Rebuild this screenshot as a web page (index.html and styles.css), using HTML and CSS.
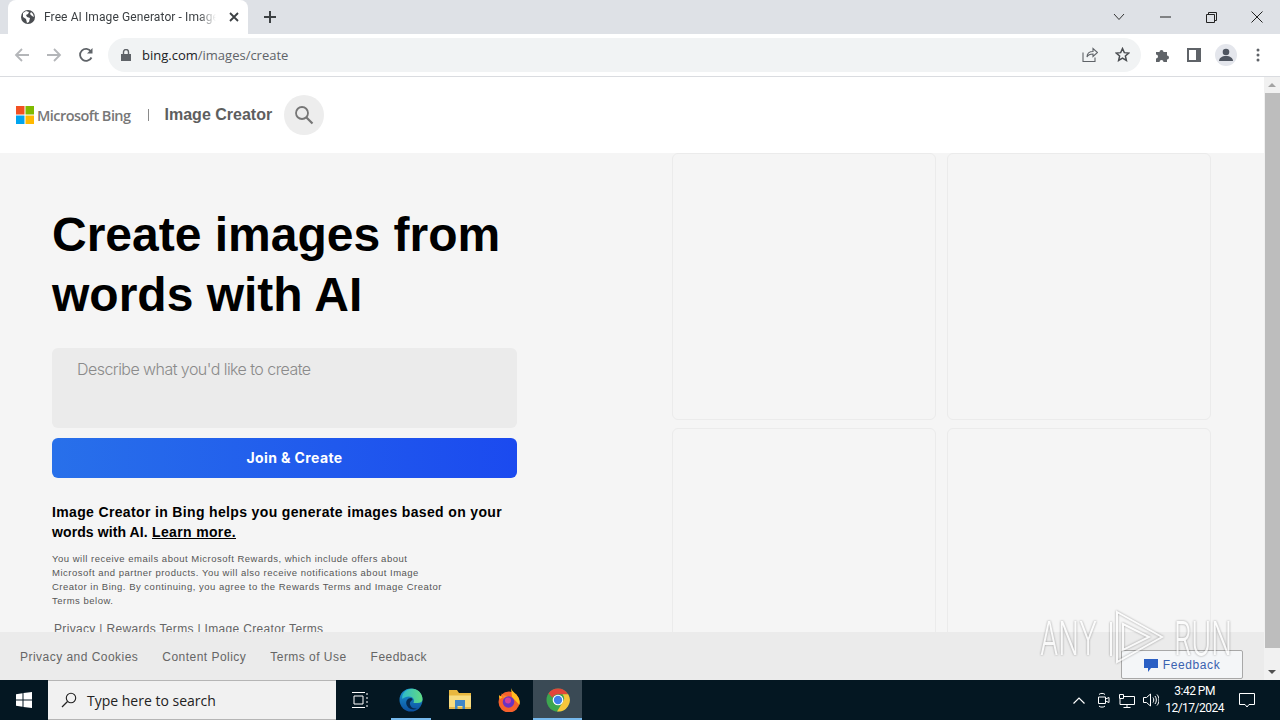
FILE: index.html
```html
<!DOCTYPE html>
<html lang="en">
<head>
  <meta charset="UTF-8">
  <title>Free AI Image Generator - Image Creator</title>
  <link rel="stylesheet" href="styles.css">
</head>
<body>
  <!-- browser chrome -->
  <div class="tabstrip">
    <div class="tab">
      <svg class="tab-globe" width="16" height="16" viewBox="0 0 16 16"><circle cx="8" cy="8" r="7" fill="#4a4d51"/><path d="M3 4l3-2 3 1-1 2-2 1 1 2 3 1-1 4-2 1-1-4-3-2z M11 3l2 2 1 3-2-1-2-2z" fill="#fff"/></svg>
      <span class="tab-title">Free AI Image Generator - Image Creator</span>
      <svg class="tab-close" width="10" height="10" viewBox="0 0 10 10"><path d="M1 1l8 8M9 1l-8 8" stroke="#3c4043" stroke-width="1.8"/></svg>
    </div>
    <svg class="new-tab" width="14" height="14" viewBox="0 0 14 14"><path d="M7 1v12M1 7h12" stroke="#3c4043" stroke-width="2"/></svg>
    <div class="window-btns">
      <svg width="12" height="8" viewBox="0 0 12 8"><path d="M1 1l5 5.500 5-5.500" fill="none" stroke="#333" stroke-width="1"/></svg>
      <svg width="11" height="2" viewBox="0 0 11 2"><path d="M0 1h11" stroke="#222" stroke-width="1"/></svg>
      <svg width="11" height="11" viewBox="0 0 11 11"><path d="M.5 2.500h8v8h-8zM2.500 2.500v-2h8v8h-2" fill="none" stroke="#222"/></svg>
      <svg class="win-close" width="12" height="12" viewBox="0 0 12 12"><path d="M.5.500l11 11M11.500.500l-11 11" stroke="#222"/></svg>
    </div>
  </div>
  <div class="toolbar">
    <svg class="nav-icon" width="16" height="16" viewBox="0 0 16 16"><path d="M15 8H2M8 2L2 8l6 6" fill="none" stroke="#b4b6b9" stroke-width="1.800"/></svg>
    <svg class="nav-icon" width="16" height="16" viewBox="0 0 16 16"><path d="M1 8h13M8 2l6 6-6 6" fill="none" stroke="#b4b6b9" stroke-width="1.800"/></svg>
    <svg class="nav-icon nav-reload" width="16" height="16" viewBox="0 0 16 16"><path d="M13.500 10.500A6 6 0 1 1 13 4.500" fill="none" stroke="#5f6368" stroke-width="1.800"/><path d="M14.500 1v5.500H9z" fill="#5f6368"/></svg>
    <div class="omnibox">
      <svg width="10" height="12" viewBox="0 0 10 12"><path d="M0 5h10v7H0z" fill="#5f6368"/><path d="M2.500 5V3a2.500 2.500 0 0 1 5 0v2" fill="none" stroke="#5f6368" stroke-width="1.400"/></svg>
      <span class="url"><b>bing.com</b>/images/create</span>
      <svg class="omni-share" width="16" height="15" viewBox="0 0 16 15"><path d="M1 5.500v9h12v-4M5 10c0-4 3-5.500 6-5.500V1.500l4.500 4-4.500 4V7c-3 0-5 1-6 3z" fill="none" stroke="#5f6368" stroke-width="1.100"/></svg>
      <svg width="15" height="15" viewBox="0 0 24 24"><path d="M12 2.500l2.900 6.500 7.100.7-5.400 4.700 1.600 7-6.200-3.700-6.200 3.700 1.600-7L2 9.700 9.100 9z" fill="none" stroke="#4a4d51" stroke-width="2.400"/></svg>
    </div>
    <div class="toolbar-icons">
      <svg width="16" height="16" viewBox="0 0 16 16"><path d="M1 5h3.500a2 2 0 1 1 4 0H12v3.500a2 2 0 1 1 0 4V15H8.500a2 2 0 1 0-4 0H1v-3.500a2 2 0 1 0 0-4z" fill="#5f6368"/></svg>
      <svg width="14" height="14" viewBox="0 0 14 14"><path d="M0 0h14v14H0z" fill="#5f6368"/><path d="M2 2h7v10H2z" fill="#fff"/></svg>
      <span class="avatar"><svg width="14" height="14" viewBox="0 0 14 14"><circle cx="7" cy="4" r="3.300" fill="#4f5560"/><path d="M0 13c0-3 3-5 7-5s7 2 7 5z" fill="#4f5560"/></svg></span>
      <svg class="menu-dots" width="4" height="14" viewBox="0 0 4 14"><circle cx="2" cy="2" r="1.500" fill="#5f6368"/><circle cx="2" cy="7" r="1.500" fill="#5f6368"/><circle cx="2" cy="12" r="1.500" fill="#5f6368"/></svg>
    </div>
  </div>

  <!-- page -->
  <div class="viewport">
    <div class="page">
      <header class="site-header">
        <svg class="ms-logo" width="18" height="18" viewBox="0 0 18 18"><path d="M0 0h8.500v8.500H0z" fill="#f25022"/><path d="M9.500 0H18v8.500H9.500z" fill="#7fba00"/><path d="M0 9.500h8.500V18H0z" fill="#00a4ef"/><path d="M9.500 9.500H18V18H9.500z" fill="#ffb900"/></svg>
        <span class="brand">Microsoft Bing</span>
        <span class="brand-sep"></span>
        <span class="product">Image Creator</span>
        <span class="search-btn"><svg width="20" height="20" viewBox="0 0 20 20"><circle cx="8" cy="8" r="6" fill="none" stroke="#767676" stroke-width="1.800"/><path d="M12.500 12.500l6 6" stroke="#767676" stroke-width="2.200"/></svg></span>
      </header>
      <main class="content">
        <section class="hero">
          <h1>Create images from words with AI</h1>
          <div class="prompt">Describe what you'd like to create</div>
          <button class="join">Join &amp; Create</button>
          <p class="lead">Image Creator in Bing helps you generate images based on your <span class="lead-end">words with AI.</span> <a href="#">Learn more.</a></p>
          <p class="legal">You will receive emails about Microsoft Rewards, which include offers about Microsoft and partner products. You will also receive notifications about Image Creator in Bing. By continuing, you agree to the Rewards Terms and Image Creator Terms below.</p>
          <p class="terms">Privacy | Rewards Terms | Image Creator Terms</p>
        </section>
        <section class="gallery">
          <div class="tile"></div>
          <div class="tile"></div>
          <div class="tile"></div>
          <div class="tile"></div>
        </section>
      </main>
      <footer class="site-footer">
        <a href="#">Privacy and Cookies</a>
        <a href="#">Content Policy</a>
        <a href="#">Terms of Use</a>
        <a href="#">Feedback</a>
      </footer>
      <div class="feedback">
        <svg width="14" height="14" viewBox="0 0 14 14"><path d="M0 1h14v9H7l-3 4v-4H0z" fill="#2a5fc4"/></svg>
        <span>Feedback</span>
      </div>
    </div>
    <div class="scrollbar">
      <span class="arrow-up"></span>
      <span class="thumb"></span>
      <span class="arrow-down"></span>
    </div>
  </div>

  <!-- taskbar -->
  <div class="taskbar">
    <span class="start"><svg width="16" height="16" viewBox="0 0 16 16"><path d="M0 2.300l6.500-1v6.200H0zM7.500 1.100L16 0v7.500H7.500zM0 8.500h6.500v6.200l-6.500-1zM7.500 8.500H16V16l-8.500-1.100z" fill="#fff"/></svg></span>
    <div class="task-search">
      <svg width="16" height="16" viewBox="0 0 16 16"><circle cx="10" cy="6" r="4.700" fill="none" stroke="#222" stroke-width="1.100"/><path d="M6.500 9.500L1 15" stroke="#222" stroke-width="1.300"/></svg>
      <span>Type here to search</span>
    </div>
    <span class="task-btn task-view"><svg width="16" height="16" viewBox="0 0 16 16"><path d="M0 .500h13M0 15.500h13M2 4h9v8H2zM15 1v2M15 5v2M15 9v2M15 13v2" fill="none" stroke="#fff"/></svg></span>
    <span class="task-btn running task-edge"><svg width="24" height="24" viewBox="0 0 24 24"><defs><linearGradient id="edge" x1="0" y1="0" x2="0" y2="1"><stop offset="0" stop-color="#1b9ad6"/><stop offset="1" stop-color="#0c4f9e"/></linearGradient><linearGradient id="edge-top" x1="0" y1="0" x2="1" y2="0"><stop offset="0" stop-color="#2fb9c9"/><stop offset="1" stop-color="#62dc83"/></linearGradient></defs><circle cx="12" cy="12" r="11.500" fill="url(#edge)"/><path d="M4 6C7 1 13 0 17 1.500c4 1.500 6.500 5.500 6.500 10 0 2.500-2 3.500-5 3.500h-4c1-2 .5-5-2-6-3-1.500-7 0-9 2C3 9.500 3 8 4 6z" fill="url(#edge-top)"/><path d="M12 10c-3.500 0-5.500 3-4.500 6.500S13 23 18 20.500c-4 .5-6.500-1.500-7-4-.5-2 .5-3.500 2.500-4.500 0-1-.5-2-1.500-2z" fill="#06294f"/></svg></span>
    <span class="task-btn"><svg width="24" height="22" viewBox="0 0 24 22"><path d="M1 1h8l2 3h12v16H1z" fill="#e8b73f"/><path d="M1 6.500h22V20H1z" fill="#f8dc80"/><path d="M1 18h22v2H1z" fill="#e3b64b"/><path d="M7 11h10v9h-2.500v-3h-5v3H7z" fill="#3f86c8"/></svg></span>
    <span class="task-btn"><svg width="24" height="24" viewBox="0 0 24 24"><circle cx="12" cy="14" r="10.500" fill="#f6612c"/><path d="M14 0c1 4 5 5 7 9 2 3 2 6 1.500 8L15 9zM2 7c0 2 0 3 1 4l3-2c-2-.5-3-1-4-2z" fill="#ffbb1f"/><path d="M4 4c1 3 4 4 8 4l-5 3z" fill="#f9892b"/><circle cx="11.500" cy="14" r="5.800" fill="#6a33c2"/><circle cx="11" cy="12.500" r="3" fill="#d43f9a"/></svg></span>
    <span class="task-btn running active"><svg width="24" height="24" viewBox="0 0 24 24"><circle cx="12" cy="12" r="11.500" fill="#3da64f"/><path d="M12 .500a11.500 11.500 0 0 1 10 5.700H12a6 6 0 0 0-5.500 3.500L2.500 5.500A11.500 11.500 0 0 1 12 .500z" fill="#e2463a"/><path d="M22.200 6.200A11.500 11.500 0 0 1 11 23.500l5.500-9a6 6 0 0 0 0-8.300z" fill="#f6c63c"/><circle cx="12" cy="12" r="5.300" fill="#fff"/><circle cx="12" cy="12" r="4.200" fill="#3f80ea"/></svg></span>
    <div class="tray">
      <span class="tray-icon"><svg width="12" height="7" viewBox="0 0 12 7"><path d="M.5 6.500L6 1l5.500 5.500" fill="none" stroke="#fff" stroke-width="1.200"/></svg></span>
      <span class="tray-icon"><svg width="13" height="16" viewBox="0 0 13 16"><path d="M1.500 5h7v6.500h-7zM8.500 7L12 5.500v5L8.500 9M2 2.500C3 1 7 1 8 2.500M2 14c1 1.500 5 1.500 6 0" fill="none" stroke="#fff"/></svg></span>
      <span class="tray-icon"><svg width="16" height="15" viewBox="0 0 16 15"><path d="M5 3.500h10.500v8H1V6M8 11.500v3M4.500 14.500h7M.5 1.500h4v4h-4z" fill="none" stroke="#fff"/></svg></span>
      <span class="tray-icon"><svg width="16" height="14" viewBox="0 0 16 14"><path d="M.5 4.500h3L7.500 1v12l-4-3.500h-3zM10 4.500c1 1.500 1 3.500 0 5M12 3c1.800 2 1.800 6 0 8M14 1.500c2.600 3 2.600 8 0 11" fill="none" stroke="#fff"/></svg></span>
      <div class="clock"><span>3:42 PM</span><span>12/17/2024</span></div>
      <svg class="notify" width="16" height="15" viewBox="0 0 16 15"><path d="M.5.500h15v11H10L8 14l-2-2.500H.5z" fill="none" stroke="#fff"/></svg>
    </div>
  </div>

  <div class="watermark">
    <span class="wm-word">ANY</span>
    <svg width="56" height="54" viewBox="0 0 56 54"><path d="M2 12v34M8 2l45 25L8 52zM14 14l26 13-26 13z" fill="none" stroke="#fff" stroke-width="2"/></svg>
    <span class="wm-word">RUN</span>
  </div>
</body>
</html>
```

FILE: styles.css
```css
* {
  box-sizing: border-box;
}

html, body {
  margin: 0;
  height: 720px;
  overflow: hidden;
}

body {
  position: relative;
  display: flex;
  flex-direction: column;
  width: 1280px;
  font-family: "Liberation Sans", Arial, sans-serif;
  background: #f5f5f5;
}

a {
  color: inherit;
}

/* Browser tab strip */
.tabstrip {
  display: flex;
  align-items: center;
  height: 34px;
  flex: none;
  background: #dee1e6;
}

.tab {
  display: flex;
  align-items: center;
  width: 240px;
  height: 34px;
  margin: 0 0 0 8px;
  padding: 0 9px 0 12px;
  background: #fff;
  border-radius: 8px 8px 0 0;
}

.tab-globe {
  flex: none;
}

.tab-title {
  width: 172px;
  margin-left: 8px;
  font-family: Roboto, sans-serif;
  font-size: 12px;
  letter-spacing: .1px;
  color: #3c4043;
  white-space: nowrap;
  overflow: hidden;
  -webkit-mask-image: linear-gradient(90deg, #000 90%, transparent);
  mask-image: linear-gradient(90deg, #000 90%, transparent);
}

.tab-close {
  margin-left: auto;
}

.new-tab {
  margin-left: 15px;
}

.window-btns {
  display: flex;
  align-items: center;
  gap: 35px;
  margin-left: auto;
  padding-right: 17px;
}

.win-close {
  margin-left: -1px;
}

/* Toolbar */
.toolbar {
  display: flex;
  align-items: center;
  height: 43px;
  flex: none;
  padding: 0 0 1px 14px;
  background: #fff;
  border-bottom: 1px solid #dadce0;
}

.nav-icon {
  margin-right: 16px;
}

.nav-reload {
  margin-right: 14px;
}

.omnibox {
  display: flex;
  align-items: center;
  width: 1033px;
  height: 34px;
  padding: 0 11px 0 13px;
  background: #f1f3f4;
  border-radius: 17px;
}

.url {
  margin-left: 11px;
  font-family: "Open Sans", sans-serif;
  font-size: 13px;
  color: #5f6368;
}

.url b {
  font-weight: 400;
  color: #202124;
}

.omni-share {
  margin-left: auto;
  margin-right: 17px;
}

.toolbar-icons {
  display: flex;
  align-items: center;
  gap: 16px;
  margin-left: 14px;
}

.avatar {
  display: flex;
  align-items: center;
  justify-content: center;
  width: 22px;
  height: 22px;
  margin: 0 -1px 0 -2px;
  border-radius: 50%;
  background: #e4e6ec;
}

.menu-dots {
  margin-left: 4px;
}

/* Page */
.viewport {
  display: flex;
  flex: 1;
  min-height: 0;
}

.page {
  position: relative;
  display: flex;
  flex-direction: column;
  flex: 1;
  min-width: 0;
}

.site-header {
  display: flex;
  align-items: center;
  height: 76px;
  flex: none;
  padding: 0 0 0 16px;
  background: #fff;
}

.brand {
  margin-left: 3px;
  font-family: "Open Sans", sans-serif;
  font-size: 14.500px;
  font-weight: 600;
  letter-spacing: -.55px;
  color: #777;
}

.brand-sep {
  width: 1px;
  height: 12px;
  margin: 0 16px 0 17px;
  background: #8a8a8a;
}

.product {
  font-size: 16px;
  font-weight: 700;
  letter-spacing: 0;
  color: #5e5e5e;
}

.search-btn {
  display: flex;
  align-items: center;
  justify-content: center;
  width: 40px;
  height: 40px;
  margin-left: 12px;
  border-radius: 50%;
  background: #ededed;
}

.content {
  display: flex;
  flex: 1;
  min-height: 0;
  overflow: hidden;
  background: #f5f5f5;
}

.hero {
  width: 672px;
  flex: none;
  padding: 52px 0 0 52px;
}

h1 {
  width: 470px;
  margin: 0;
  font-size: 48px;
  line-height: 60px;
  font-weight: 700;
  color: #000;
}

.prompt {
  width: 465px;
  height: 80px;
  margin-top: 23px;
  padding: 11px 25px;
  background: #ebebeb;
  border-radius: 6px;
  font-family: Inter, sans-serif;
  font-size: 16px;
  font-weight: 300;
  letter-spacing: -.55px;
  color: #8a8a8a;
}

.join {
  display: block;
  width: 465px;
  height: 40px;
  margin-top: 10px;
  padding: 0 0 2px 20px;
  border: none;
  border-radius: 6px;
  background: linear-gradient(90deg, #2870ea, #1b4aef);
  font-family: Inter, "Liberation Sans", sans-serif;
  font-size: 14px;
  font-weight: 700;
  letter-spacing: .4px;
  color: #fff;
}

.lead {
  width: 465px;
  margin: 24px 0 0;
  font-size: 14px;
  line-height: 20px;
  font-weight: 700;
  letter-spacing: .35px;
  color: #000;
}

.lead-end {
  letter-spacing: .1px;
}

.legal {
  width: 395px;
  margin: 10px 0 0;
  font-size: 9.500px;
  line-height: 14px;
  letter-spacing: .5px;
  color: #555;
}

.terms {
  margin: 13px 0 0 2px;
  font-size: 12px;
  line-height: 16px;
  letter-spacing: .33px;
  color: #666;
}

.gallery {
  display: grid;
  grid-template-columns: 264px 264px;
  grid-auto-rows: 267px;
  gap: 8px 11px;
}

.tile {
  background: #f5f5f5;
  border: 1px solid #ebebeb;
  border-radius: 6px;
}

.site-footer {
  display: flex;
  align-items: center;
  gap: 24px;
  height: 48px;
  flex: none;
  padding: 1px 0 0 20px;
  background: #ebebeb;
  font-size: 12px;
  letter-spacing: .47px;
  color: #666;
}

.site-footer a {
  text-decoration: none;
}

.feedback {
  position: absolute;
  left: 1121px;
  bottom: 1px;
  display: flex;
  align-items: center;
  justify-content: center;
  gap: 5px;
  width: 122px;
  height: 29px;
  padding-top: 1px;
  background: #f4f6f8;
  border: 1px solid #a8a8a8;
  border-radius: 2px;
  font-size: 12px;
  letter-spacing: .6px;
  color: #3a62b0;
}

.scrollbar {
  display: flex;
  flex-direction: column;
  align-items: flex-end;
  width: 16px;
  flex: none;
  background: #f1f1f1;
}

.arrow-up,
.arrow-down {
  width: 0;
  height: 0;
  margin: 6px 4px;
  border-left: 4px solid transparent;
  border-right: 4px solid transparent;
}

.arrow-up {
  border-bottom: 4px solid #a3a3a3;
}

.arrow-down {
  margin-top: auto;
  border-top: 4px solid #505050;
}

.thumb {
  height: 555px;
  width: 15px;
  background: #bdbdbd;
}

/* Windows taskbar */
.taskbar {
  display: flex;
  align-items: center;
  height: 40px;
  flex: none;
  background: #041722;
}

.start {
  display: flex;
  align-items: center;
  justify-content: center;
  width: 48px;
  height: 40px;
}

.task-search {
  display: flex;
  align-items: center;
  gap: 10px;
  width: 288px;
  height: 40px;
  padding-left: 13px;
  background: #f1f1f1;
  border: 1px solid #b5b5b5;
  border-width: 1px 0;
  font-family: "Open Sans", sans-serif;
  font-size: 14px;
  color: #222;
}

.task-btn {
  display: flex;
  align-items: center;
  justify-content: center;
  width: 49px;
  height: 40px;
}

.task-view {
  width: 48px;
}

.task-edge {
  margin-left: 2px;
}

.task-btn.running {
  background: linear-gradient(#76b9ed, #76b9ed) center bottom / 40px 2px no-repeat;
}

.task-btn.active {
  background: linear-gradient(#76b9ed, #76b9ed) center bottom / 100% 2px no-repeat, #3a4a55;
}

.tray {
  display: flex;
  align-items: center;
  margin-left: auto;
  padding-right: 25px;
}

.tray-icon {
  display: flex;
  align-items: center;
  justify-content: center;
  width: 24px;
}

.clock {
  display: flex;
  flex-direction: column;
  align-items: center;
  margin-left: 2px;
  font-family: Roboto, sans-serif;
  font-size: 12px;
  line-height: 17px;
  letter-spacing: -.5px;
  color: #fff;
}

.notify {
  margin-left: 15px;
}

/* ANY.RUN watermark laid over the capture */
.watermark {
  position: absolute;
  left: 1040px;
  top: 610px;
  display: flex;
  align-items: center;
  gap: 9px;
  height: 54px;
  opacity: .7;
  font-family: Inter, sans-serif;
  font-size: 47px;
  font-weight: 300;
  color: #fff;
  filter: drop-shadow(0 0 1px rgba(0, 0, 0, .5));
}

.wm-word {
  width: 60px;
  transform: scaleX(.58);
  transform-origin: left center;
}
```
